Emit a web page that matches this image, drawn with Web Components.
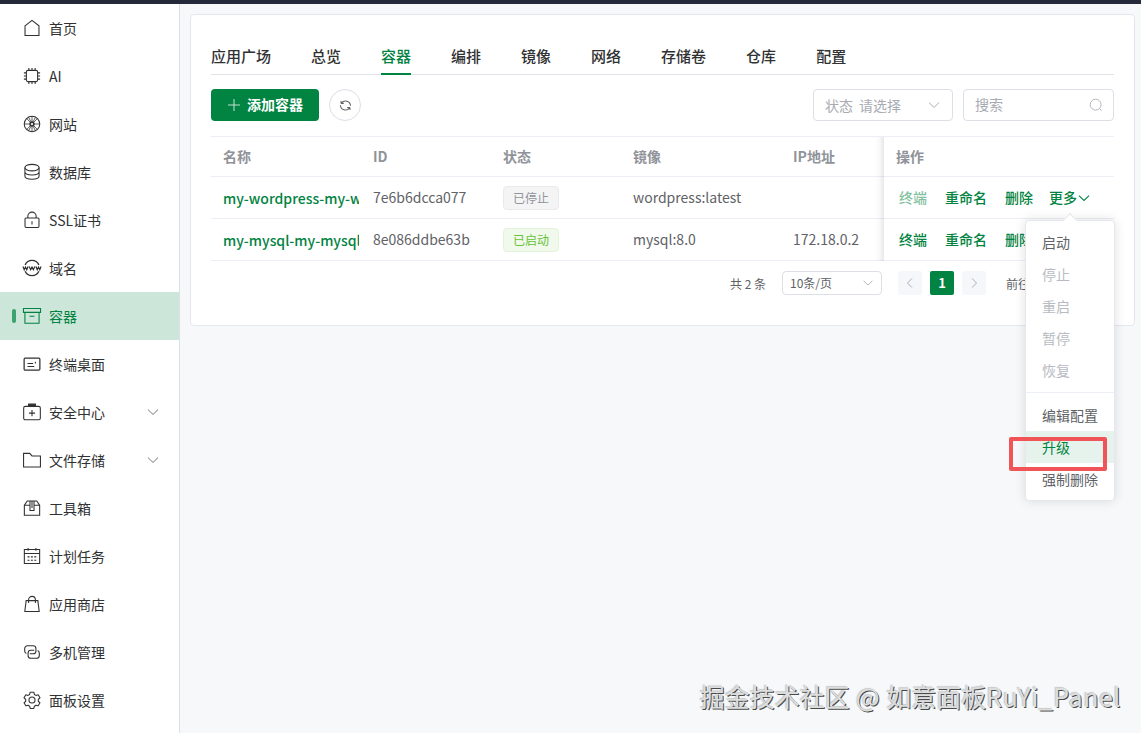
<!DOCTYPE html>
<html lang="zh-CN">
<head>
<meta charset="utf-8">
<title>容器</title>
<style>
  :root {
    --primary: #018341;
    --primary-light: #cce6d9;
    --primary-lighter: #e6f3ec;
    --line: #e4e7ed;
    --row-line: #ebeef5;
    --text: #303133;
    --regular: #606266;
    --muted: #909399;
    --hint: #a8abb2;
  }
  body {
    margin: 0;
    font: 14px/20px "Noto Sans CJK SC", "Noto Sans", sans-serif;
    color: var(--text);
  }
</style>
</head>
<body>
<panel-app></panel-app>

<script>
const ICONS = {
  home: '<path d="M1.8 6.1 8 1.2l6.200 4.900v8.600H1.8z"/>',
  cpu: '<rect x="3" y="3" width="10" height="10" rx="1.4"/><path d="M5.2 3V.8M8 3V.8M10.8 3V.8M5.2 15.2V13M8 15.2V13M10.8 15.2V13M3 5.2H.8M3 8H.8M3 10.8H.8M15.2 5.2H13M15.2 8H13M15.2 10.8H13"/>',
  globe: '<circle cx="8" cy="8" r="6.9"/><circle cx="8" cy="8" r="1.7" stroke-width="1.4"/><path d="M8 1v5M8 10v5M1 8h5M10 8h5M3.2 3l3.4 3.5M9.5 9.5l3.4 3.5M12.9 3 9.5 6.5M6.5 9.5 3.2 13M5 2l2 4M11 2 9 6M5 14l2-4M11 14l-2-4" stroke-width=".7"/>',
  database: '<ellipse cx="8" cy="4.1" rx="6.3" ry="2.9"/><path d="M1.7 4.1v7.5c0 1.7 2.8 2.9 6.3 2.9s6.3-1.2 6.3-2.9V4.1M1.7 7.8c0 1.7 2.8 2.9 6.3 2.9s6.3-1.2 6.3-2.9"/>',
  lock: '<rect x="1.8" y="6.2" width="12.4" height="8.4" rx="1"/><path d="M4.3 6.2V4.7a3.7 3.7 0 0 1 7.4 0v1.5M8 9v3"/>',
  www: '<path d="M1.9 5.200a6.700 6.700 0 0 1 12.200 0M1.900 10.900a6.700 6.700 0 0 0 12.200 0" stroke-width="1.200"/><path d="m0 6.700 1.100 2.800 1.100-2.300 1.100 2.300 1.200-2.800M5.500 6.700l1.300 2.800L8 7.200l1.200 2.300 1.300-2.800M11.500 6.700l1.200 2.800 1.100-2.300 1.100 2.300L16 6.700" stroke-width="1.100"/>',
  box: '<path d="M.4 1.3h15.200v3.500H.4zM1.700 4.800h12.600v9.600H1.700zM5.800 8.300h4.400"/>',
  ticket: '<rect x="1" y="2.7" width="14" height="10.700" rx="1" stroke-width="1.100"/><path d="M4 7.600h5M4 10.200h6M11 5.900v1.700"/>',
  kit: '<rect x=".6" y="3" width="14.800" height="11.900" rx="1.400"/><path d="M5 3V1h6v2M5.300 9h5.400M8 6.300v5.400"/><path d="M4.800 2h6.400" stroke-width="2"/>',
  folder: '<path d="M.5 2.100h5.500L8 4.400h7.500v9.900H.5z"/>',
  toolbox: '<path d="M1.200 5.500v9h13.600v-9L12.200 1.700H3.800zM1.200 5.500h4.900M9.900 5.500h4.900M6.200 1.700v8.500h3.600V1.700M8 2v6"/>',
  calendar: '<path d="M1.200 2.300h13.600v12.400H1.200zM1.200 5.700h13.600M4.500.9v2.500M11.500.9v2.500"/><path d="M4 8.800h8.500M4 11.700h8.500" stroke-dasharray="1.800 1.200"/>',
  bag: '<path d="M2.800 5h10.400l1.200 9.600H1.600zM5 7V4.200a3 3 0 0 1 6 0V7"/>',
  link: '<path d="M10 6.500H7A2.500 2.500 0 0 0 4.500 9v2A2.500 2.500 0 0 0 7 13.500h5a2.500 2.500 0 0 0 2.500-2.500V9A2.500 2.500 0 0 0 13 6.700"/><path d="M6 9.500h3A2.500 2.500 0 0 0 11.500 7V5A2.500 2.500 0 0 0 9 2.500H4A2.500 2.500 0 0 0 1.500 5v2A2.500 2.500 0 0 0 3 9.300"/>',
  gear: '<path d="M6.400 1.100h3.200l.5 2 1.400.8 2-.6 1.600 2.700-1.500 1.500v1.600l1.500 1.400-1.600 2.700-2-.5-1.400.8-.5 2H6.400l-.5-2-1.400-.8-2 .5-1.600-2.700 1.500-1.400V7.500L.9 6l1.600-2.700 2 .6 1.400-.8z" stroke-linejoin="round"/><circle cx="8" cy="8" r="2.700"/>',
  down: '<path d="m2.200 5.200 5.800 5.600 5.800-5.600"/>',
  left: '<path d="M10.500 2 4.700 8l5.800 6"/>',
  right: '<path d="M5.500 2l5.800 6-5.800 6"/>',
  plus: '<path d="M8 1.200v13.600M1.200 8h13.600"/>',
  search: '<circle cx="7.600" cy="7.600" r="6.200"/><path d="m12.100 12.100 2.500 2.500"/>',
  refresh: '<path d="M2.500 5.600V2.400M2.500 5.400h3.400M3 5A6.200 6.200 0 0 1 14.200 8.400M13.500 10.400v3.200M13.500 10.600h-3.400M13 11A6.200 6.200 0 0 1 1.800 7.600"/>'
}

class PanelIcon extends HTMLElement {
  constructor () {
    super()
    this.attachShadow({ mode: 'open' })
  }

  connectedCallback () {
    const size = this.getAttribute('size') || 16
    const stroke = this.getAttribute('stroke') || 1
    this.shadowRoot.innerHTML = `
      <style>
        :host { display: inline-flex; flex: none; }
        svg { display: block; overflow: visible; fill: none; stroke: currentColor; }
      </style>
      <svg width="${size}" height="${size}" viewBox="0 0 16 16" stroke-width="${stroke}">${ICONS[this.getAttribute('name')]}</svg>
    `
  }
}

class NavItem extends HTMLElement {
  constructor () {
    super()
    this.attachShadow({ mode: 'open' })
  }

  connectedCallback () {
    this.shadowRoot.innerHTML = `
      <style>
        :host {
          display: flex;
          align-items: center;
          height: 48px;
          box-sizing: border-box;
          padding: 0 19px 0 12px;
        }
        .mark { width: 4px; height: 14px; border-radius: 2px; margin-right: 7px; }
        .label { flex: 1; margin: 0 0 1px 8px; }
        :host([active]) { background: var(--primary-light); color: var(--primary); }
        :host([active]) .mark { background: #3da26d; }
        .arrow { color: var(--regular); }
      </style>
      <span class="mark"></span>
      <panel-icon name="${this.getAttribute('icon')}" size="18" stroke=".95"></panel-icon>
      <span class="label"><slot></slot></span>
      ${this.hasAttribute('nested') ? '<panel-icon class="arrow" name="down" size="14"></panel-icon>' : ''}
    `
  }
}

class SideNav extends HTMLElement {
  constructor () {
    super()
    this.attachShadow({ mode: 'open' }).innerHTML = `
      <style>
        :host {
          display: block;
          flex: none;
          width: 180px;
          box-sizing: border-box;
          background: #fff;
          border-right: 1px solid #dcdfe6;
        }
      </style>
      <nav-item icon="home">首页</nav-item>
      <nav-item icon="cpu">AI</nav-item>
      <nav-item icon="globe">网站</nav-item>
      <nav-item icon="database">数据库</nav-item>
      <nav-item icon="lock">SSL证书</nav-item>
      <nav-item icon="www">域名</nav-item>
      <nav-item icon="box" active>容器</nav-item>
      <nav-item icon="ticket">终端桌面</nav-item>
      <nav-item icon="kit" nested>安全中心</nav-item>
      <nav-item icon="folder" nested>文件存储</nav-item>
      <nav-item icon="toolbox">工具箱</nav-item>
      <nav-item icon="calendar">计划任务</nav-item>
      <nav-item icon="bag">应用商店</nav-item>
      <nav-item icon="link">多机管理</nav-item>
      <nav-item icon="gear">面板设置</nav-item>
    `
  }
}

class TabBar extends HTMLElement {
  constructor () {
    super()
    const tabs = ['应用广场', '总览', '容器', '编排', '镜像', '网络', '存储卷', '仓库', '配置']
    this.attachShadow({ mode: 'open' }).innerHTML = `
      <style>
        :host {
          display: flex;
          gap: 40px;
          height: 40px;
          box-sizing: border-box;
          border-bottom: 1px solid #e0e3e8;
          font-size: 15px;
          line-height: 41px;
          font-weight: 500;
        }
        span { height: 40px; box-sizing: border-box; }
        .active { color: var(--primary); border-bottom: 2px solid var(--primary); }
      </style>
      ${tabs.map(it => `<span class="${it === '容器' ? 'active' : ''}">${it}</span>`).join('')}
    `
  }
}

class ToolBar extends HTMLElement {
  constructor () {
    super()
    this.attachShadow({ mode: 'open' }).innerHTML = `
      <style>
        :host { display: flex; align-items: center; gap: 10px; height: 32px; margin: 14px 0 15px; }
        div { display: flex; align-items: center; box-sizing: border-box; height: 32px; }
        .add {
          width: 108px;
          padding-left: 16px;
          gap: 6px;
          border-radius: 4px;
          background: var(--primary);
          color: #fff;
          font-weight: 700;
        }
        .add panel-icon { opacity: .75; }
        .add span, .search span { margin-bottom: 2px; }
        .round { width: 32px; justify-content: center; border: 1px solid #dcdfe6; border-radius: 50%; color: var(--regular); }
        .field { border: 1px solid #dcdfe6; border-radius: 4px; padding: 0 11px; color: var(--hint); justify-content: space-between; }
        .select { width: 140px; margin-left: auto; }
        .search { width: 151px; padding-right: 10px; }
        .select span:first-child { margin-right: 6px; }
      </style>
      <div class="add"><panel-icon name="plus" size="14" stroke="1.200"></panel-icon><span>添加容器</span></div>
      <div class="round"><panel-icon name="refresh" size="13" stroke="1.300"></panel-icon></div>
      <div class="field select"><span><span>状态</span><span>请选择</span></span><panel-icon name="down" size="14" stroke="1.100"></panel-icon></div>
      <div class="field search"><span>搜索</span><panel-icon name="search" size="14"></panel-icon></div>
    `
  }
}

class StatusTag extends HTMLElement {
  constructor () {
    super()
    this.attachShadow({ mode: 'open' }).innerHTML = `
      <style>
        :host {
          display: flex;
          align-items: center;
          justify-content: center;
          width: 56px;
          height: 24px;
          box-sizing: border-box;
          border: 1px solid #e9e9eb;
          border-radius: 4px;
          background: #f4f4f5;
          color: #909399;
          font-size: 12px;
        }
        :host([running]) { border-color: #e1f3d8; background: #f0f9eb; color: #67c23a; }
      </style>
      <slot></slot>
    `
  }
}

class ContainerTable extends HTMLElement {
  constructor () {
    super()
    this.attachShadow({ mode: 'open' }).innerHTML = `
      <style>
        :host { display: block; border-top: 1px solid var(--row-line); }
        .row {
          display: grid;
          grid-template-columns: 150px 130px 130px 160px 103px 230px;
          align-items: center;
          height: 42px;
          box-sizing: border-box;
          border-bottom: 1px solid var(--row-line);
          color: var(--regular);
        }
        .head { height: 40px; color: var(--muted); font-weight: 700; }
        .row > div { padding: 0 0 2px 12px; white-space: nowrap; }
        .row > .tag { padding-bottom: 0; }
        .row > .name { margin-right: 2px; padding-bottom: 0; overflow: hidden; color: var(--primary); font-weight: 500; }
        .row > .ops {
          display: flex;
          position: relative;
          align-items: center;
          height: 100%;
          box-sizing: border-box;
          padding-left: 16px;
          margin-left: -1px;
          color: var(--primary);
          font-weight: 500;
        }
        .ops::before {
          content: "";
          position: absolute;
          left: -9px;
          top: 0;
          bottom: -1px;
          width: 10px;
          background: linear-gradient(to right, rgba(0, 0, 0, 0), rgba(0, 0, 0, .02) 50%, rgba(0, 0, 0, .09));
        }
        .row.head > .ops { padding-left: 13px; color: var(--muted); font-weight: 700; }
        .ops span { margin-right: 18px; }
        .ops span:nth-child(3) { margin-right: 16px; }
        .ops span:nth-child(4) { margin-right: 0; }
        .ops panel-icon { margin-top: 2px; }
        .off { opacity: .5; }
      </style>
      <div class="row head">
        <div>名称</div><div>ID</div><div>状态</div><div>镜像</div><div>IP地址</div><div class="ops">操作</div>
      </div>
      <div class="row">
        <div class="name">my-wordpress-my-w</div>
        <div>7e6b6dcca077</div>
        <div class="tag"><status-tag>已停止</status-tag></div>
        <div>wordpress:latest</div>
        <div></div>
        <div class="ops"><span class="off">终端</span><span>重命名</span><span>删除</span><span>更多</span><panel-icon name="down" size="14" stroke="1.200"></panel-icon></div>
      </div>
      <div class="row">
        <div class="name">my-mysql-my-mysql</div>
        <div>8e086ddbe63b</div>
        <div class="tag"><status-tag running>已启动</status-tag></div>
        <div>mysql:8.0</div>
        <div>172.18.0.2</div>
        <div class="ops"><span>终端</span><span>重命名</span><span>删除</span></div>
      </div>
    `
  }
}

class PageBar extends HTMLElement {
  constructor () {
    super()
    this.attachShadow({ mode: 'open' }).innerHTML = `
      <style>
        :host {
          display: flex;
          align-items: center;
          height: 24px;
          margin: 10px 0 0 519px;
          font-size: 12px;
          color: var(--regular);
        }
        div { display: flex; align-items: center; justify-content: center; height: 24px; box-sizing: border-box; }
        .total { margin-right: 16px; padding-top: 2px; width: 36px; white-space: nowrap; }
        .size {
          width: 100px;
          justify-content: space-between;
          padding: 0 7px;
          margin-right: 16px;
          border: 1px solid #dcdfe6;
          border-radius: 4px;
        }
        .size panel-icon { color: var(--hint); }
        .page { width: 24px; margin-right: 8px; border-radius: 2px; background: #f5f7fa; color: var(--hint); }
        .page.current { background: var(--primary); color: #fff; font-weight: 700; font-size: 13px; }
        .jump { margin-left: 12px; padding-top: 2px; }
      </style>
      <div class="total">共 2 条</div>
      <div class="size">10条/页<panel-icon name="down" size="12" stroke="1.200"></panel-icon></div>
      <div class="page"><panel-icon name="left" size="12" stroke="1.300"></panel-icon></div>
      <div class="page current">1</div>
      <div class="page"><panel-icon name="right" size="12" stroke="1.300"></panel-icon></div>
      <div class="jump">前往</div>
    `
  }
}

class MoreMenu extends HTMLElement {
  constructor () {
    super()
    this.attachShadow({ mode: 'open' }).innerHTML = `
      <style>
        :host {
          display: block;
          position: absolute;
          left: 1025px;
          top: 216px;
          width: 90px;
          box-sizing: border-box;
          padding: 5px 0;
          border: 1px solid var(--line);
          border-radius: 4px;
          background: #fff;
          box-shadow: 0 0 12px rgba(0, 0, 0, .12);
          color: var(--regular);
        }
        :host::before {
          content: "";
          position: absolute;
          left: 39px;
          top: -6px;
          width: 10px;
          height: 10px;
          box-sizing: border-box;
          border: 1px solid var(--line);
          border-right: 0;
          border-bottom: 0;
          background: #fff;
          transform: rotate(45deg);
        }
        div { position: relative; height: 32px; line-height: 32px; padding-left: 16px; }
        .off { color: #b8bbc2; }
        .split { margin-top: 6px; padding-top: 6px; border-top: 1px solid var(--row-line); }
        .hover { background: var(--primary-lighter); color: var(--primary); }
      </style>
      <div>启动</div>
      <div class="off">停止</div>
      <div class="off">重启</div>
      <div class="off">暂停</div>
      <div class="off">恢复</div>
      <div class="split">编辑配置</div>
      <div class="hover">升级</div>
      <div>强制删除</div>
    `
  }
}

class PanelApp extends HTMLElement {
  constructor () {
    super()
    this.attachShadow({ mode: 'open' }).innerHTML = `
      <style>
        :host {
          display: flex;
          position: relative;
          width: 1141px;
          height: 733px;
          box-sizing: border-box;
          border-top: 4px solid #252a3b;
          background: #f6f8fa;
          overflow: hidden;
        }
        main { flex: 1; padding: 10px 6px 0 10px; }
        .card {
          height: 312px;
          box-sizing: border-box;
          padding: 20px;
          border: 1px solid var(--line);
          border-radius: 4px;
          background: #fff;
        }
        .highlight {
          position: absolute;
          left: 1009px;
          top: 433px;
          width: 98px;
          height: 34px;
          box-sizing: border-box;
          border: 4px solid #f05456;
          border-radius: 2px;
        }
        .watermark {
          position: absolute;
          right: 20px;
          top: 674px;
          font-size: 25px;
          line-height: 36px;
          white-space: nowrap;
          color: #dcdddd;
          text-shadow: 1px 1px 0 #4a4a4a, -1px -1px 1px #c8c8c8;
        }
        .latin { letter-spacing: .55px; }
      </style>
      <side-nav></side-nav>
      <main>
        <section class="card">
          <tab-bar></tab-bar>
          <tool-bar></tool-bar>
          <container-table></container-table>
          <page-bar></page-bar>
        </section>
      </main>
      <more-menu></more-menu>
      <div class="highlight"></div>
      <div class="watermark">掘金技术社区<span class="latin"> @ </span>如意面板<span class="latin">RuYi_Panel</span></div>
    `
  }
}

customElements.define('panel-icon', PanelIcon)
customElements.define('nav-item', NavItem)
customElements.define('side-nav', SideNav)
customElements.define('tab-bar', TabBar)
customElements.define('tool-bar', ToolBar)
customElements.define('status-tag', StatusTag)
customElements.define('container-table', ContainerTable)
customElements.define('page-bar', PageBar)
customElements.define('more-menu', MoreMenu)
customElements.define('panel-app', PanelApp)
</script>
</body>
</html>
